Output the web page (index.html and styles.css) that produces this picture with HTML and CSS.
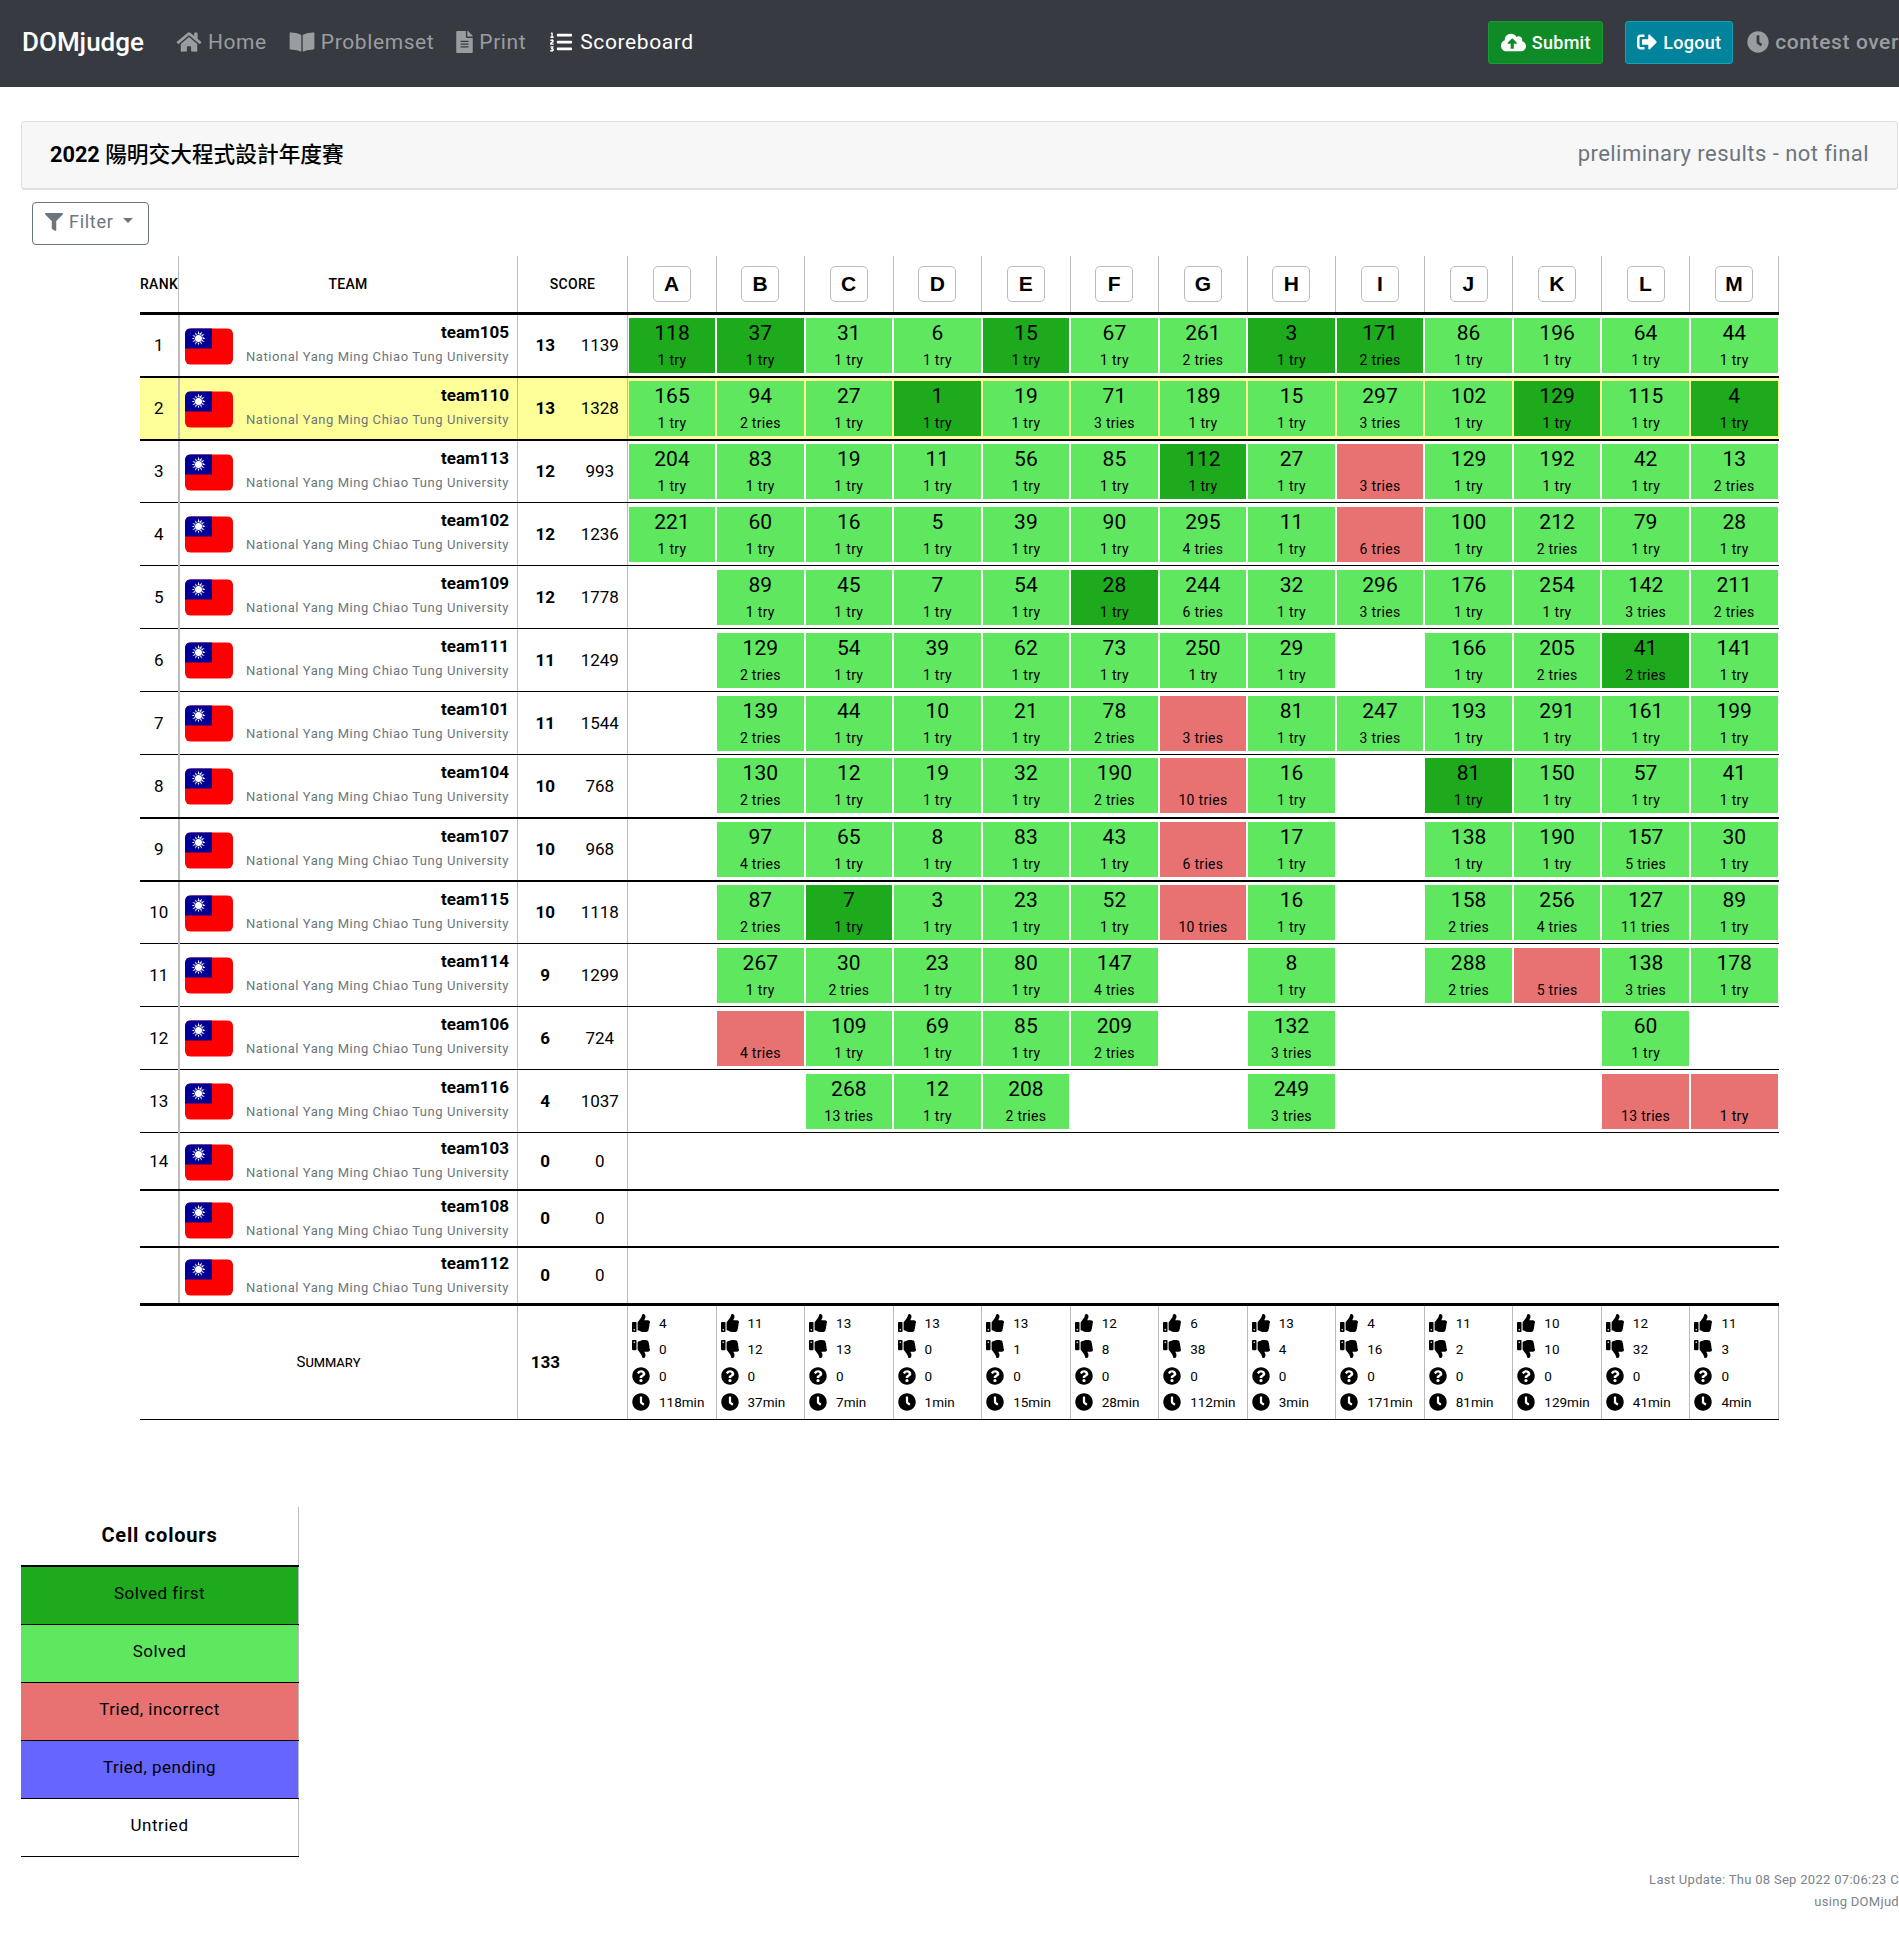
FILE: index.html

```html
<!DOCTYPE html>
<html lang="en">
<head>
    <meta charset="UTF-8">
    <meta name="viewport" content="width=device-width, initial-scale=1.0">
    <title>Scoreboard - DOMjudge</title>
    <link rel="stylesheet" href="styles.css">
</head>
<body>
<svg class="icon-defs" aria-hidden="true">
    <symbol id="i-home" viewBox="0 0 576 512"><path d="M280.37 148.26L96 300.11V464a16 16 0 0 0 16 16l112.06-.29a16 16 0 0 0 15.92-16V368a16 16 0 0 1 16-16h64a16 16 0 0 1 16 16v95.64a16 16 0 0 0 16 16.05L464 480a16 16 0 0 0 16-16V300L295.67 148.26a12.19 12.19 0 0 0-15.3 0zM571.6 251.47L488 182.56V44.05a12 12 0 0 0-12-12h-56a12 12 0 0 0-12 12v72.61L318.47 43a48 48 0 0 0-61 0L4.34 251.47a12 12 0 0 0-1.6 16.9l25.5 31A12 12 0 0 0 45.15 301l235.22-193.74a12.19 12.19 0 0 1 15.3 0L530.9 301a12 12 0 0 0 16.9-1.6l25.5-31a12 12 0 0 0-1.7-16.93z"/></symbol>
    <symbol id="i-book" viewBox="0 0 576 512"><path d="M542.22 32.05c-54.8 3.11-163.72 14.43-230.96 55.59-4.64 2.84-7.27 7.89-7.27 13.17v363.87c0 11.55 12.63 18.85 23.28 13.49 69.18-34.82 169.23-44.32 218.7-46.92 16.89-.89 30.02-14.43 30.02-30.66V62.75c.01-17.71-15.35-31.74-33.77-30.7zM264.73 87.64C197.5 46.48 88.58 35.17 33.78 32.05 15.36 31.01 0 45.04 0 62.75V400.6c0 16.24 13.13 29.78 30.02 30.66 49.49 2.6 149.59 12.11 218.77 46.95 10.62 5.35 23.21-1.94 23.21-13.46V100.63c0-5.29-2.62-10.14-7.27-12.99z"/></symbol>
    <symbol id="i-file" viewBox="0 0 384 512"><path d="M224 136V0H24C10.7 0 0 10.7 0 24v464c0 13.3 10.7 24 24 24h336c13.3 0 24-10.7 24-24V160H248c-13.2 0-24-10.8-24-24zm64 236c0 6.6-5.4 12-12 12H108c-6.6 0-12-5.4-12-12v-8c0-6.6 5.4-12 12-12h168c6.6 0 12 5.4 12 12v8zm0-64c0 6.6-5.4 12-12 12H108c-6.6 0-12-5.4-12-12v-8c0-6.6 5.4-12 12-12h168c6.6 0 12 5.4 12 12v8zm0-72v8c0 6.6-5.4 12-12 12H108c-6.6 0-12-5.4-12-12v-8c0-6.6 5.4-12 12-12h168c6.6 0 12 5.4 12 12zm96-114.1v6.1H256V0h6.1c6.4 0 12.5 2.5 17 7l97.9 98c4.5 4.5 7 10.6 7 16.9z"/></symbol>
    <symbol id="i-list" viewBox="0 0 512 512"><path d="M61.77 401l17.5-20.15a19.92 19.92 0 0 0 5.07-14.19v-3.31C84.34 356 80.5 352 73 352H16a8 8 0 0 0-8 8v16a8 8 0 0 0 8 8h22.83a157.41 157.41 0 0 0-11 12.31l-5.61 7c-4 5.07-5.25 10.13-2.8 14.88l1.05 1.93c3 5.76 6.29 7.88 12.25 7.88h4.73c10.33 0 15.94 2.44 15.94 9.09 0 4.72-4.2 8.22-14.36 8.22a41.54 41.54 0 0 1-15.47-3.12c-6.49-3.88-11.74-3.5-15.6 3.12l-5.59 9.31c-3.72 6.13-3.19 11.72 2.63 15.94 7.71 4.69 20.38 9.44 37 9.44 34.16 0 48.5-22.75 48.5-44.12-.03-14.38-9.12-29.76-28.73-34.88zM496 224H176a16 16 0 0 0-16 16v32a16 16 0 0 0 16 16h320a16 16 0 0 0 16-16v-32a16 16 0 0 0-16-16zm0-160H176a16 16 0 0 0-16 16v32a16 16 0 0 0 16 16h320a16 16 0 0 0 16-16V80a16 16 0 0 0-16-16zm0 320H176a16 16 0 0 0-16 16v32a16 16 0 0 0 16 16h320a16 16 0 0 0 16-16v-32a16 16 0 0 0-16-16zM16 160h64a8 8 0 0 0 8-8v-16a8 8 0 0 0-8-8H64V40a8 8 0 0 0-8-8H32a8 8 0 0 0-7.14 4.42l-8 16A8 8 0 0 0 24 64h8v64H16a8 8 0 0 0-8 8v16a8 8 0 0 0 8 8zm-3.91 160H80a8 8 0 0 0 8-8v-16a8 8 0 0 0-8-8H41.32c3.29-10.29 48.68-18.68 48.68-56.44 0-29.06-25-39.56-44.47-39.56-21.36 0-33.8 10-40.46 18.75-4.37 5.59-3 10.84 2.8 15.37l8.58 6.88c5.61 4.56 11 2.47 16.12-2.44a13.44 13.44 0 0 1 9.46-3.84c3.33 0 9.28 1.56 9.28 8.75C51 248.19 0 257.31 0 304.59v4C0 316 5.08 320 12.09 320z"/></symbol>
    <symbol id="i-cloud" viewBox="0 0 640 512"><path d="M537.6 226.6c4.1-10.7 6.4-22.4 6.4-34.6 0-53-43-96-96-96-19.7 0-38.1 6-53.3 16.2C367 64.2 315.3 32 256 32c-88.4 0-160 71.6-160 160 0 2.7.1 5.4.2 8.1C40.2 219.8 0 273.2 0 336c0 79.5 64.5 144 144 144h368c70.7 0 128-57.3 128-128 0-61.9-44-113.6-102.4-125.4zM393.4 288H328v112c0 8.8-7.2 16-16 16h-48c-8.8 0-16-7.2-16-16V288h-65.4c-14.3 0-21.4-17.2-11.3-27.3l105.4-105.4c6.2-6.2 16.4-6.2 22.6 0l105.4 105.4c10.1 10.1 2.9 27.3-11.3 27.3z"/></symbol>
    <symbol id="i-signout" viewBox="0 0 512 512"><path d="M497 273L329 441c-15 15-41 4.5-41-17v-96H152c-13.3 0-24-10.7-24-24v-96c0-13.3 10.7-24 24-24h136V88c0-21.4 25.9-32 41-17l168 168c9.3 9.4 9.3 24.6 0 34zM192 436v-40c0-6.6-5.4-12-12-12H96c-17.7 0-32-14.3-32-32V160c0-17.7 14.3-32 32-32h84c6.6 0 12-5.4 12-12V76c0-6.6-5.4-12-12-12H96c-53 0-96 43-96 96v192c0 53 43 96 96 96h84c6.6 0 12-5.4 12-12z"/></symbol>
    <symbol id="i-clock" viewBox="0 0 512 512"><path d="M256,8C119,8,8,119,8,256S119,504,256,504,504,393,504,256,393,8,256,8Zm92.49,313h0l-20,25a16,16,0,0,1-22.49,2.5h0l-67-49.72a40,40,0,0,1-15-31.23V112a16,16,0,0,1,16-16h32a16,16,0,0,1,16,16V256l58,42.5A16,16,0,0,1,348.49,321Z"/></symbol>
    <symbol id="i-filter" viewBox="0 0 512 512"><path d="M487.976 0H24.028C2.71 0-8.047 25.866 7.058 40.971L192 225.941V432c0 7.831 3.821 15.17 10.237 19.662l80 55.98C298.02 518.69 320 507.493 320 487.98V225.941l184.947-184.97C520.021 25.896 509.338 0 487.976 0z"/></symbol>
    <symbol id="i-up" viewBox="0 0 512 512"><path d="M104 224H24c-13.255 0-24 10.745-24 24v240c0 13.255 10.745 24 24 24h80c13.255 0 24-10.745 24-24V248c0-13.255-10.745-24-24-24zM64 472c-13.255 0-24-10.745-24-24s10.745-24 24-24 24 10.745 24 24-10.745 24-24 24zM384 81.452c0 42.416-25.97 66.208-33.277 94.548h101.723c33.397 0 59.397 27.746 59.553 58.098.084 17.938-7.546 37.249-19.439 49.197l-.11.11c9.836 23.337 8.237 56.037-9.308 79.469 8.681 25.895-.069 57.704-16.382 74.757 4.298 17.598 2.244 32.575-6.148 44.632C440.202 511.587 389.616 512 346.839 512l-2.845-.001c-48.287-.017-87.806-17.598-119.56-31.725-15.957-7.099-36.821-15.887-52.651-16.178-6.54-.12-11.783-5.457-11.783-11.998v-213.77c0-3.2 1.282-6.271 3.558-8.521 39.614-39.144 56.648-80.587 89.117-113.111 14.804-14.832 20.188-37.236 25.393-58.902C282.515 39.293 291.817 0 312 0c24 0 72 8 72 81.452z"/></symbol>
    <symbol id="i-help" viewBox="0 0 512 512"><path d="M504 256c0 136.997-111.043 248-248 248S8 392.997 8 256C8 119.083 119.043 8 256 8s248 111.083 248 248zM262.655 90c-54.497 0-89.255 22.957-116.549 63.758-3.536 5.286-2.353 12.415 2.715 16.258l34.699 26.31c5.205 3.947 12.621 3.008 16.665-2.122 17.864-22.658 30.113-35.797 57.303-35.797 20.429 0 45.698 13.148 45.698 32.958 0 14.976-12.363 22.667-32.534 33.976C247.128 238.528 216 254.941 216 296v4c0 6.627 5.373 12 12 12h56c6.627 0 12-5.373 12-12v-1.333c0-28.462 83.186-29.647 83.186-106.667 0-58.002-60.165-102-116.531-102zM256 338c-25.365 0-46 20.635-46 46 0 25.364 20.635 46 46 46s46-20.636 46-46c0-25.365-20.635-46-46-46z"/></symbol>
    <symbol id="i-flag" viewBox="0 0 48 36">
        <rect width="48" height="36" fill="#fe0000"/>
        <rect width="27" height="20" fill="#000095"/>
        <path fill="#fff" d="M13.5 2l1 3.6 2.5-2.7-.9 3.6 3.6-.9-2.7 2.5L20.5 10l-3.5 1 2.7 2.5-3.6-.9.9 3.6-2.5-2.7-1 3.5-1-3.5L10 16.200l.9-3.600-3.600.9L10 11l-3.500-1 3.500-1-2.700-2.500 3.600.9-.9-3.600 2.500 2.700z"/>
        <circle cx="13.500" cy="10" r="4.200" fill="#000095"/>
        <circle cx="13.500" cy="10" r="3.500" fill="#fff"/>
    </symbol>
</svg>

<nav class="navbar">
    <a class="brand">DOMjudge</a>
    <a class="nav-link"><svg class="icon"><use href="#i-home"/></svg>Home</a>
    <a class="nav-link"><svg class="icon"><use href="#i-book"/></svg>Problemset</a>
    <a class="nav-link"><svg class="icon icon-file"><use href="#i-file"/></svg>Print</a>
    <a class="nav-link active"><svg class="icon"><use href="#i-list"/></svg>Scoreboard</a>
    <div class="nav-right">
        <a class="btn-nav btn-submit"><svg class="icon"><use href="#i-cloud"/></svg>Submit</a>
        <a class="btn-nav btn-logout"><svg class="icon"><use href="#i-signout"/></svg>Logout</a>
        <span class="contest-state"><svg class="icon"><use href="#i-clock"/></svg>contest over</span>
    </div>
</nav>

<div class="card-header">
    <span class="contest-title"><b>2022</b> 陽明交大程式設計年度賽</span>
    <span class="contest-note">preliminary results - not final</span>
</div>

<button class="btn-filter"><svg class="icon"><use href="#i-filter"/></svg>Filter<span class="caret"></span></button>

<table class="scoreboard">
    <thead>
        <tr>
            <th class="col-rank">RANK</th>
            <th class="col-team">TEAM</th>
            <th class="col-score" colspan="2">SCORE</th>
            <th class="col-prob"><span class="prob">A</span></th>
            <th class="col-prob"><span class="prob">B</span></th>
            <th class="col-prob"><span class="prob">C</span></th>
            <th class="col-prob"><span class="prob">D</span></th>
            <th class="col-prob"><span class="prob">E</span></th>
            <th class="col-prob"><span class="prob">F</span></th>
            <th class="col-prob"><span class="prob">G</span></th>
            <th class="col-prob"><span class="prob">H</span></th>
            <th class="col-prob"><span class="prob">I</span></th>
            <th class="col-prob"><span class="prob">J</span></th>
            <th class="col-prob"><span class="prob">K</span></th>
            <th class="col-prob"><span class="prob">L</span></th>
            <th class="col-prob"><span class="prob">M</span></th>
        </tr>
    </thead>
    <tbody>
        <tr class="row-thick">
            <td class="rank">1</td>
            <td class="team"><div class="team-box"><svg class="flag"><use href="#i-flag"/></svg><div class="team-text"><div class="team-name">team105</div><div class="team-aff">National Yang Ming Chiao Tung University</div></div></div></td>
            <td class="points">13</td><td class="time">1139</td>
            <td class="cell"><div class="sc first">118<span>1 try</span></div></td>
            <td class="cell"><div class="sc first">37<span>1 try</span></div></td>
            <td class="cell"><div class="sc ok">31<span>1 try</span></div></td>
            <td class="cell"><div class="sc ok">6<span>1 try</span></div></td>
            <td class="cell"><div class="sc first">15<span>1 try</span></div></td>
            <td class="cell"><div class="sc ok">67<span>1 try</span></div></td>
            <td class="cell"><div class="sc ok">261<span>2 tries</span></div></td>
            <td class="cell"><div class="sc first">3<span>1 try</span></div></td>
            <td class="cell"><div class="sc first">171<span>2 tries</span></div></td>
            <td class="cell"><div class="sc ok">86<span>1 try</span></div></td>
            <td class="cell"><div class="sc ok">196<span>1 try</span></div></td>
            <td class="cell"><div class="sc ok">64<span>1 try</span></div></td>
            <td class="cell"><div class="sc ok">44<span>1 try</span></div></td>
        </tr>
        <tr class="row-thick self">
            <td class="rank">2</td>
            <td class="team"><div class="team-box"><svg class="flag"><use href="#i-flag"/></svg><div class="team-text"><div class="team-name">team110</div><div class="team-aff">National Yang Ming Chiao Tung University</div></div></div></td>
            <td class="points">13</td><td class="time">1328</td>
            <td class="cell"><div class="sc ok">165<span>1 try</span></div></td>
            <td class="cell"><div class="sc ok">94<span>2 tries</span></div></td>
            <td class="cell"><div class="sc ok">27<span>1 try</span></div></td>
            <td class="cell"><div class="sc first">1<span>1 try</span></div></td>
            <td class="cell"><div class="sc ok">19<span>1 try</span></div></td>
            <td class="cell"><div class="sc ok">71<span>3 tries</span></div></td>
            <td class="cell"><div class="sc ok">189<span>1 try</span></div></td>
            <td class="cell"><div class="sc ok">15<span>1 try</span></div></td>
            <td class="cell"><div class="sc ok">297<span>3 tries</span></div></td>
            <td class="cell"><div class="sc ok">102<span>1 try</span></div></td>
            <td class="cell"><div class="sc first">129<span>1 try</span></div></td>
            <td class="cell"><div class="sc ok">115<span>1 try</span></div></td>
            <td class="cell"><div class="sc first">4<span>1 try</span></div></td>
        </tr>
        <tr>
            <td class="rank">3</td>
            <td class="team"><div class="team-box"><svg class="flag"><use href="#i-flag"/></svg><div class="team-text"><div class="team-name">team113</div><div class="team-aff">National Yang Ming Chiao Tung University</div></div></div></td>
            <td class="points">12</td><td class="time">993</td>
            <td class="cell"><div class="sc ok">204<span>1 try</span></div></td>
            <td class="cell"><div class="sc ok">83<span>1 try</span></div></td>
            <td class="cell"><div class="sc ok">19<span>1 try</span></div></td>
            <td class="cell"><div class="sc ok">11<span>1 try</span></div></td>
            <td class="cell"><div class="sc ok">56<span>1 try</span></div></td>
            <td class="cell"><div class="sc ok">85<span>1 try</span></div></td>
            <td class="cell"><div class="sc first">112<span>1 try</span></div></td>
            <td class="cell"><div class="sc ok">27<span>1 try</span></div></td>
            <td class="cell"><div class="sc bad">&nbsp;<span>3 tries</span></div></td>
            <td class="cell"><div class="sc ok">129<span>1 try</span></div></td>
            <td class="cell"><div class="sc ok">192<span>1 try</span></div></td>
            <td class="cell"><div class="sc ok">42<span>1 try</span></div></td>
            <td class="cell"><div class="sc ok">13<span>2 tries</span></div></td>
        </tr>
        <tr>
            <td class="rank">4</td>
            <td class="team"><div class="team-box"><svg class="flag"><use href="#i-flag"/></svg><div class="team-text"><div class="team-name">team102</div><div class="team-aff">National Yang Ming Chiao Tung University</div></div></div></td>
            <td class="points">12</td><td class="time">1236</td>
            <td class="cell"><div class="sc ok">221<span>1 try</span></div></td>
            <td class="cell"><div class="sc ok">60<span>1 try</span></div></td>
            <td class="cell"><div class="sc ok">16<span>1 try</span></div></td>
            <td class="cell"><div class="sc ok">5<span>1 try</span></div></td>
            <td class="cell"><div class="sc ok">39<span>1 try</span></div></td>
            <td class="cell"><div class="sc ok">90<span>1 try</span></div></td>
            <td class="cell"><div class="sc ok">295<span>4 tries</span></div></td>
            <td class="cell"><div class="sc ok">11<span>1 try</span></div></td>
            <td class="cell"><div class="sc bad">&nbsp;<span>6 tries</span></div></td>
            <td class="cell"><div class="sc ok">100<span>1 try</span></div></td>
            <td class="cell"><div class="sc ok">212<span>2 tries</span></div></td>
            <td class="cell"><div class="sc ok">79<span>1 try</span></div></td>
            <td class="cell"><div class="sc ok">28<span>1 try</span></div></td>
        </tr>
        <tr>
            <td class="rank">5</td>
            <td class="team"><div class="team-box"><svg class="flag"><use href="#i-flag"/></svg><div class="team-text"><div class="team-name">team109</div><div class="team-aff">National Yang Ming Chiao Tung University</div></div></div></td>
            <td class="points">12</td><td class="time">1778</td>
            <td class="cell"></td>
            <td class="cell"><div class="sc ok">89<span>1 try</span></div></td>
            <td class="cell"><div class="sc ok">45<span>1 try</span></div></td>
            <td class="cell"><div class="sc ok">7<span>1 try</span></div></td>
            <td class="cell"><div class="sc ok">54<span>1 try</span></div></td>
            <td class="cell"><div class="sc first">28<span>1 try</span></div></td>
            <td class="cell"><div class="sc ok">244<span>6 tries</span></div></td>
            <td class="cell"><div class="sc ok">32<span>1 try</span></div></td>
            <td class="cell"><div class="sc ok">296<span>3 tries</span></div></td>
            <td class="cell"><div class="sc ok">176<span>1 try</span></div></td>
            <td class="cell"><div class="sc ok">254<span>1 try</span></div></td>
            <td class="cell"><div class="sc ok">142<span>3 tries</span></div></td>
            <td class="cell"><div class="sc ok">211<span>2 tries</span></div></td>
        </tr>
        <tr>
            <td class="rank">6</td>
            <td class="team"><div class="team-box"><svg class="flag"><use href="#i-flag"/></svg><div class="team-text"><div class="team-name">team111</div><div class="team-aff">National Yang Ming Chiao Tung University</div></div></div></td>
            <td class="points">11</td><td class="time">1249</td>
            <td class="cell"></td>
            <td class="cell"><div class="sc ok">129<span>2 tries</span></div></td>
            <td class="cell"><div class="sc ok">54<span>1 try</span></div></td>
            <td class="cell"><div class="sc ok">39<span>1 try</span></div></td>
            <td class="cell"><div class="sc ok">62<span>1 try</span></div></td>
            <td class="cell"><div class="sc ok">73<span>1 try</span></div></td>
            <td class="cell"><div class="sc ok">250<span>1 try</span></div></td>
            <td class="cell"><div class="sc ok">29<span>1 try</span></div></td>
            <td class="cell"></td>
            <td class="cell"><div class="sc ok">166<span>1 try</span></div></td>
            <td class="cell"><div class="sc ok">205<span>2 tries</span></div></td>
            <td class="cell"><div class="sc first">41<span>2 tries</span></div></td>
            <td class="cell"><div class="sc ok">141<span>1 try</span></div></td>
        </tr>
        <tr>
            <td class="rank">7</td>
            <td class="team"><div class="team-box"><svg class="flag"><use href="#i-flag"/></svg><div class="team-text"><div class="team-name">team101</div><div class="team-aff">National Yang Ming Chiao Tung University</div></div></div></td>
            <td class="points">11</td><td class="time">1544</td>
            <td class="cell"></td>
            <td class="cell"><div class="sc ok">139<span>2 tries</span></div></td>
            <td class="cell"><div class="sc ok">44<span>1 try</span></div></td>
            <td class="cell"><div class="sc ok">10<span>1 try</span></div></td>
            <td class="cell"><div class="sc ok">21<span>1 try</span></div></td>
            <td class="cell"><div class="sc ok">78<span>2 tries</span></div></td>
            <td class="cell"><div class="sc bad">&nbsp;<span>3 tries</span></div></td>
            <td class="cell"><div class="sc ok">81<span>1 try</span></div></td>
            <td class="cell"><div class="sc ok">247<span>3 tries</span></div></td>
            <td class="cell"><div class="sc ok">193<span>1 try</span></div></td>
            <td class="cell"><div class="sc ok">291<span>1 try</span></div></td>
            <td class="cell"><div class="sc ok">161<span>1 try</span></div></td>
            <td class="cell"><div class="sc ok">199<span>1 try</span></div></td>
        </tr>
        <tr class="row-thick">
            <td class="rank">8</td>
            <td class="team"><div class="team-box"><svg class="flag"><use href="#i-flag"/></svg><div class="team-text"><div class="team-name">team104</div><div class="team-aff">National Yang Ming Chiao Tung University</div></div></div></td>
            <td class="points">10</td><td class="time">768</td>
            <td class="cell"></td>
            <td class="cell"><div class="sc ok">130<span>2 tries</span></div></td>
            <td class="cell"><div class="sc ok">12<span>1 try</span></div></td>
            <td class="cell"><div class="sc ok">19<span>1 try</span></div></td>
            <td class="cell"><div class="sc ok">32<span>1 try</span></div></td>
            <td class="cell"><div class="sc ok">190<span>2 tries</span></div></td>
            <td class="cell"><div class="sc bad">&nbsp;<span>10 tries</span></div></td>
            <td class="cell"><div class="sc ok">16<span>1 try</span></div></td>
            <td class="cell"></td>
            <td class="cell"><div class="sc first">81<span>1 try</span></div></td>
            <td class="cell"><div class="sc ok">150<span>1 try</span></div></td>
            <td class="cell"><div class="sc ok">57<span>1 try</span></div></td>
            <td class="cell"><div class="sc ok">41<span>1 try</span></div></td>
        </tr>
        <tr class="row-thick">
            <td class="rank">9</td>
            <td class="team"><div class="team-box"><svg class="flag"><use href="#i-flag"/></svg><div class="team-text"><div class="team-name">team107</div><div class="team-aff">National Yang Ming Chiao Tung University</div></div></div></td>
            <td class="points">10</td><td class="time">968</td>
            <td class="cell"></td>
            <td class="cell"><div class="sc ok">97<span>4 tries</span></div></td>
            <td class="cell"><div class="sc ok">65<span>1 try</span></div></td>
            <td class="cell"><div class="sc ok">8<span>1 try</span></div></td>
            <td class="cell"><div class="sc ok">83<span>1 try</span></div></td>
            <td class="cell"><div class="sc ok">43<span>1 try</span></div></td>
            <td class="cell"><div class="sc bad">&nbsp;<span>6 tries</span></div></td>
            <td class="cell"><div class="sc ok">17<span>1 try</span></div></td>
            <td class="cell"></td>
            <td class="cell"><div class="sc ok">138<span>1 try</span></div></td>
            <td class="cell"><div class="sc ok">190<span>1 try</span></div></td>
            <td class="cell"><div class="sc ok">157<span>5 tries</span></div></td>
            <td class="cell"><div class="sc ok">30<span>1 try</span></div></td>
        </tr>
        <tr>
            <td class="rank">10</td>
            <td class="team"><div class="team-box"><svg class="flag"><use href="#i-flag"/></svg><div class="team-text"><div class="team-name">team115</div><div class="team-aff">National Yang Ming Chiao Tung University</div></div></div></td>
            <td class="points">10</td><td class="time">1118</td>
            <td class="cell"></td>
            <td class="cell"><div class="sc ok">87<span>2 tries</span></div></td>
            <td class="cell"><div class="sc first">7<span>1 try</span></div></td>
            <td class="cell"><div class="sc ok">3<span>1 try</span></div></td>
            <td class="cell"><div class="sc ok">23<span>1 try</span></div></td>
            <td class="cell"><div class="sc ok">52<span>1 try</span></div></td>
            <td class="cell"><div class="sc bad">&nbsp;<span>10 tries</span></div></td>
            <td class="cell"><div class="sc ok">16<span>1 try</span></div></td>
            <td class="cell"></td>
            <td class="cell"><div class="sc ok">158<span>2 tries</span></div></td>
            <td class="cell"><div class="sc ok">256<span>4 tries</span></div></td>
            <td class="cell"><div class="sc ok">127<span>11 tries</span></div></td>
            <td class="cell"><div class="sc ok">89<span>1 try</span></div></td>
        </tr>
        <tr>
            <td class="rank">11</td>
            <td class="team"><div class="team-box"><svg class="flag"><use href="#i-flag"/></svg><div class="team-text"><div class="team-name">team114</div><div class="team-aff">National Yang Ming Chiao Tung University</div></div></div></td>
            <td class="points">9</td><td class="time">1299</td>
            <td class="cell"></td>
            <td class="cell"><div class="sc ok">267<span>1 try</span></div></td>
            <td class="cell"><div class="sc ok">30<span>2 tries</span></div></td>
            <td class="cell"><div class="sc ok">23<span>1 try</span></div></td>
            <td class="cell"><div class="sc ok">80<span>1 try</span></div></td>
            <td class="cell"><div class="sc ok">147<span>4 tries</span></div></td>
            <td class="cell"></td>
            <td class="cell"><div class="sc ok">8<span>1 try</span></div></td>
            <td class="cell"></td>
            <td class="cell"><div class="sc ok">288<span>2 tries</span></div></td>
            <td class="cell"><div class="sc bad">&nbsp;<span>5 tries</span></div></td>
            <td class="cell"><div class="sc ok">138<span>3 tries</span></div></td>
            <td class="cell"><div class="sc ok">178<span>1 try</span></div></td>
        </tr>
        <tr>
            <td class="rank">12</td>
            <td class="team"><div class="team-box"><svg class="flag"><use href="#i-flag"/></svg><div class="team-text"><div class="team-name">team106</div><div class="team-aff">National Yang Ming Chiao Tung University</div></div></div></td>
            <td class="points">6</td><td class="time">724</td>
            <td class="cell"></td>
            <td class="cell"><div class="sc bad">&nbsp;<span>4 tries</span></div></td>
            <td class="cell"><div class="sc ok">109<span>1 try</span></div></td>
            <td class="cell"><div class="sc ok">69<span>1 try</span></div></td>
            <td class="cell"><div class="sc ok">85<span>1 try</span></div></td>
            <td class="cell"><div class="sc ok">209<span>2 tries</span></div></td>
            <td class="cell"></td>
            <td class="cell"><div class="sc ok">132<span>3 tries</span></div></td>
            <td class="cell"></td>
            <td class="cell"></td>
            <td class="cell"></td>
            <td class="cell"><div class="sc ok">60<span>1 try</span></div></td>
            <td class="cell"></td>
        </tr>
        <tr>
            <td class="rank">13</td>
            <td class="team"><div class="team-box"><svg class="flag"><use href="#i-flag"/></svg><div class="team-text"><div class="team-name">team116</div><div class="team-aff">National Yang Ming Chiao Tung University</div></div></div></td>
            <td class="points">4</td><td class="time">1037</td>
            <td class="cell"></td>
            <td class="cell"></td>
            <td class="cell"><div class="sc ok">268<span>13 tries</span></div></td>
            <td class="cell"><div class="sc ok">12<span>1 try</span></div></td>
            <td class="cell"><div class="sc ok">208<span>2 tries</span></div></td>
            <td class="cell"></td>
            <td class="cell"></td>
            <td class="cell"><div class="sc ok">249<span>3 tries</span></div></td>
            <td class="cell"></td>
            <td class="cell"></td>
            <td class="cell"></td>
            <td class="cell"><div class="sc bad">&nbsp;<span>13 tries</span></div></td>
            <td class="cell"><div class="sc bad">&nbsp;<span>1 try</span></div></td>
        </tr>
        <tr class="row-empty row-thick">
            <td class="rank">14</td>
            <td class="team"><div class="team-box"><svg class="flag"><use href="#i-flag"/></svg><div class="team-text"><div class="team-name">team103</div><div class="team-aff">National Yang Ming Chiao Tung University</div></div></div></td>
            <td class="points">0</td><td class="time">0</td>
            <td class="blank" colspan="13"></td>
        </tr>
        <tr class="row-empty row-thick">
            <td class="rank"></td>
            <td class="team"><div class="team-box"><svg class="flag"><use href="#i-flag"/></svg><div class="team-text"><div class="team-name">team108</div><div class="team-aff">National Yang Ming Chiao Tung University</div></div></div></td>
            <td class="points">0</td><td class="time">0</td>
            <td class="blank" colspan="13"></td>
        </tr>
        <tr class="row-empty">
            <td class="rank"></td>
            <td class="team"><div class="team-box"><svg class="flag"><use href="#i-flag"/></svg><div class="team-text"><div class="team-name">team112</div><div class="team-aff">National Yang Ming Chiao Tung University</div></div></div></td>
            <td class="points">0</td><td class="time">0</td>
            <td class="blank" colspan="13"></td>
        </tr>
    </tbody>
    <tfoot>
        <tr>
            <td class="summary-label" colspan="2">Summary</td>
            <td class="summary-total" colspan="2">133</td>
            <td class="stat"><p><svg class="icon"><use href="#i-up"/></svg>4</p><p><svg class="icon flip"><use href="#i-up"/></svg>0</p><p><svg class="icon"><use href="#i-help"/></svg>0</p><p><svg class="icon"><use href="#i-clock"/></svg>118min</p></td>
            <td class="stat"><p><svg class="icon"><use href="#i-up"/></svg>11</p><p><svg class="icon flip"><use href="#i-up"/></svg>12</p><p><svg class="icon"><use href="#i-help"/></svg>0</p><p><svg class="icon"><use href="#i-clock"/></svg>37min</p></td>
            <td class="stat"><p><svg class="icon"><use href="#i-up"/></svg>13</p><p><svg class="icon flip"><use href="#i-up"/></svg>13</p><p><svg class="icon"><use href="#i-help"/></svg>0</p><p><svg class="icon"><use href="#i-clock"/></svg>7min</p></td>
            <td class="stat"><p><svg class="icon"><use href="#i-up"/></svg>13</p><p><svg class="icon flip"><use href="#i-up"/></svg>0</p><p><svg class="icon"><use href="#i-help"/></svg>0</p><p><svg class="icon"><use href="#i-clock"/></svg>1min</p></td>
            <td class="stat"><p><svg class="icon"><use href="#i-up"/></svg>13</p><p><svg class="icon flip"><use href="#i-up"/></svg>1</p><p><svg class="icon"><use href="#i-help"/></svg>0</p><p><svg class="icon"><use href="#i-clock"/></svg>15min</p></td>
            <td class="stat"><p><svg class="icon"><use href="#i-up"/></svg>12</p><p><svg class="icon flip"><use href="#i-up"/></svg>8</p><p><svg class="icon"><use href="#i-help"/></svg>0</p><p><svg class="icon"><use href="#i-clock"/></svg>28min</p></td>
            <td class="stat"><p><svg class="icon"><use href="#i-up"/></svg>6</p><p><svg class="icon flip"><use href="#i-up"/></svg>38</p><p><svg class="icon"><use href="#i-help"/></svg>0</p><p><svg class="icon"><use href="#i-clock"/></svg>112min</p></td>
            <td class="stat"><p><svg class="icon"><use href="#i-up"/></svg>13</p><p><svg class="icon flip"><use href="#i-up"/></svg>4</p><p><svg class="icon"><use href="#i-help"/></svg>0</p><p><svg class="icon"><use href="#i-clock"/></svg>3min</p></td>
            <td class="stat"><p><svg class="icon"><use href="#i-up"/></svg>4</p><p><svg class="icon flip"><use href="#i-up"/></svg>16</p><p><svg class="icon"><use href="#i-help"/></svg>0</p><p><svg class="icon"><use href="#i-clock"/></svg>171min</p></td>
            <td class="stat"><p><svg class="icon"><use href="#i-up"/></svg>11</p><p><svg class="icon flip"><use href="#i-up"/></svg>2</p><p><svg class="icon"><use href="#i-help"/></svg>0</p><p><svg class="icon"><use href="#i-clock"/></svg>81min</p></td>
            <td class="stat"><p><svg class="icon"><use href="#i-up"/></svg>10</p><p><svg class="icon flip"><use href="#i-up"/></svg>10</p><p><svg class="icon"><use href="#i-help"/></svg>0</p><p><svg class="icon"><use href="#i-clock"/></svg>129min</p></td>
            <td class="stat"><p><svg class="icon"><use href="#i-up"/></svg>12</p><p><svg class="icon flip"><use href="#i-up"/></svg>32</p><p><svg class="icon"><use href="#i-help"/></svg>0</p><p><svg class="icon"><use href="#i-clock"/></svg>41min</p></td>
            <td class="stat"><p><svg class="icon"><use href="#i-up"/></svg>11</p><p><svg class="icon flip"><use href="#i-up"/></svg>3</p><p><svg class="icon"><use href="#i-help"/></svg>0</p><p><svg class="icon"><use href="#i-clock"/></svg>4min</p></td>
        </tr>
    </tfoot>
</table>

<table class="legend">
    <thead>
        <tr><th>Cell colours</th></tr>
    </thead>
    <tbody>
        <tr><td class="first">Solved first</td></tr>
        <tr><td class="ok">Solved</td></tr>
        <tr><td class="bad">Tried, incorrect</td></tr>
        <tr><td class="pending">Tried, pending</td></tr>
        <tr><td>Untried</td></tr>
    </tbody>
</table>

<footer class="page-foot">
    <div>Last Update: Thu 08 Sep 2022 07:06:23 C</div>
    <div>using DOMjud</div>
</footer>
</body>
</html>
```

FILE: styles.css

```css
html, body {
    overflow-x: hidden;
}

body {
    margin: 0;
    font-family: Roboto, "Noto Sans CJK TC", sans-serif;
    font-size: 16px;
    color: #000;
    background-color: #fff;
}

.icon-defs {
    display: none;
}

.icon {
    width: 1em;
    height: 1em;
    fill: currentColor;
    flex-shrink: 0;
}

/* top bar */
.navbar {
    display: flex;
    align-items: center;
    box-sizing: border-box;
    height: 87px;
    padding: 0 0 3px 22px;
    background-color: #373a41;
    white-space: nowrap;
}

.brand {
    font-size: 26px;
    font-weight: 500;
    color: #fff;
    margin-right: 32px;
}

.nav-link {
    display: flex;
    align-items: center;
    gap: 6px;
    margin-right: 22px;
    font-size: 21px;
    letter-spacing: 0.6px;
    color: #9a9da0;
}

.nav-link .icon {
    width: 26px;
    height: 22px;
}

.nav-link .icon-file {
    width: 17px;
}

.nav-link.active {
    color: #fff;
}

.nav-right {
    display: flex;
    align-items: center;
    margin-left: auto;
}

.btn-nav {
    display: flex;
    align-items: center;
    justify-content: center;
    gap: 6px;
    height: 43px;
    box-sizing: border-box;
    border-radius: 3px;
    font-size: 18px;
    font-weight: 500;
    letter-spacing: 0.3px;
    color: #fff;
}

.btn-submit {
    width: 115px;
    background-color: #0e8b27;
    border: 1px solid #1a9c34;
    margin-right: 22px;
}

.btn-submit .icon {
    width: 25px;
    height: 21px;
}

.btn-logout {
    width: 108px;
    background-color: #00839b;
    border: 1px solid #14a0b8;
    margin-right: 14px;
}

.btn-logout .icon {
    width: 20px;
    height: 20px;
}

.contest-state {
    display: flex;
    align-items: center;
    gap: 6px;
    font-size: 21px;
    font-weight: 500;
    letter-spacing: 0.6px;
    color: #9a9da0;
}

.contest-state .icon {
    width: 22px;
    height: 22px;
}

/* contest title */
.card-header {
    display: flex;
    justify-content: space-between;
    align-items: center;
    box-sizing: border-box;
    height: 69px;
    margin: 34px 1px 0 21px;
    padding: 0 28px 3px;
    background-color: #f7f7f7;
    border: 1px solid #dfdfdf;
    border-bottom-width: 2px;
    border-radius: 4px;
}

.contest-title {
    margin-bottom: 3px;
    font-size: 21.7px;
    font-weight: 500;
}

.contest-title b {
    font-weight: 700;
}

.contest-note {
    font-size: 22px;
    letter-spacing: 0.45px;
    color: #6c757d;
}

.btn-filter {
    display: flex;
    align-items: center;
    gap: 6px;
    box-sizing: border-box;
    width: 117px;
    height: 43px;
    margin: 12px 0 0 32px;
    padding: 0 0 4px 12px;
    background-color: #fff;
    border: 1px solid #6c757d;
    border-radius: 4px;
    font-family: inherit;
    font-size: 18px;
    letter-spacing: 0.7px;
    color: #6c757d;
}

.btn-filter .icon {
    width: 18px;
    height: 18px;
}

.caret {
    width: 0;
    height: 0;
    margin: -3px 0 0 4px;
    border-left: 5px solid transparent;
    border-right: 5px solid transparent;
    border-top: 5px solid #6c757d;
}

/* scoreboard */
.scoreboard {
    width: 1639px;
    margin: 11px 0 0 140px;
    table-layout: fixed;
    border-collapse: collapse;
}

.scoreboard th {
    height: 56px;
    padding: 0;
    font-size: 14px;
    font-weight: 500;
    letter-spacing: 0.3px;
    border-right: 1px solid #bbb;
    border-bottom: 3px solid #000;
}

.col-rank {
    width: 38px;
    text-align: left;
}

.col-team {
    width: 338px;
    padding-left: 6px;
}

.col-score {
    width: 109px;
}

.prob {
    display: inline-block;
    box-sizing: border-box;
    width: 38px;
    height: 36px;
    line-height: 34px;
    background-color: #fff;
    border: 1px solid #bbb;
    border-radius: 5px;
    font-family: "Liberation Sans", sans-serif;
    font-size: 21px;
    font-weight: 700;
    text-align: center;
}

.scoreboard tbody td {
    box-sizing: border-box;
    height: 63px;
    padding: 0;
    border-top: 1px solid #000;
    border-bottom: 1px solid #000;
}

.scoreboard tbody tr.row-thick td {
    border-bottom-width: 2px;
}

.scoreboard tbody tr.row-empty td {
    height: 57.3px;
}

.scoreboard tbody tr.self td {
    background-color: #ffff99;
}

.scoreboard tbody tr:last-child td {
    border-bottom-width: 3px;
}

.rank {
    text-align: center;
    font-size: 17px;
    border-right: 2px solid #bbb;
}

.scoreboard tbody td.team {
    padding-top: 5px;
    vertical-align: top;
    border-right: 1px solid #bbb;
}

.scoreboard tbody tr.row-empty td.team {
    padding-top: 3px;
}

.team-box {
    display: flex;
    justify-content: space-between;
    padding: 0 8px 0 5px;
}

.flag {
    width: 48px;
    height: 37px;
    margin-top: 8px;
    border-radius: 6px;
}

.team-text {
    text-align: right;
}

.team-name {
    font-size: 17px;
    font-weight: 700;
    line-height: 25px;
}

.team-aff {
    margin-top: 2px;
    font-size: 13px;
    line-height: 20px;
    letter-spacing: 0.55px;
    color: #6c757d;
}

.points {
    text-align: center;
    font-size: 17px;
    font-weight: 700;
}

.time {
    text-align: center;
    font-size: 17px;
    border-right: 1px solid #bbb;
}

.scoreboard td.cell {
    padding: 0 1px;
}

.sc {
    height: 55px;
    margin: 1px 0;
    box-sizing: border-box;
    padding-top: 2px;
    text-align: center;
    font-size: 21px;
    line-height: 26px;
}

.sc span {
    display: block;
    margin-top: 2px;
    font-size: 14px;
    line-height: 24px;
    letter-spacing: 0.3px;
}

.first {
    background-color: #1daa1d;
}

.ok {
    background-color: #60e760;
}

.bad {
    background-color: #e87272;
}

.pending {
    background-color: #6666ff;
}

/* summary row */
.scoreboard tfoot td {
    padding: 0;
    border-bottom: 1px solid #000;
    border-right: 1px solid #bbb;
}

.summary-label {
    text-align: center;
    font-size: 15px;
    font-variant: small-caps;
}

.summary-total {
    padding-right: 54px !important;
    text-align: center;
    font-size: 17px;
    font-weight: 700;
}

.stat {
    height: 113px;
}

.stat p {
    display: flex;
    align-items: center;
    gap: 9px;
    height: 26.5px;
    margin: 0;
    padding-left: 4px;
    font-size: 13.5px;
}

.stat .icon {
    width: 18px;
    height: 18px;
}

.flip {
    transform: scaleY(-1);
}

/* legend */
.legend {
    width: 278px;
    margin: 87px 0 0 21px;
    border-collapse: collapse;
    text-align: center;
}

.legend th {
    height: 56px;
    padding: 0 0 2px;
    font-size: 20px;
    font-weight: 700;
    letter-spacing: 0.8px;
    border-right: 1px solid #bbb;
    border-bottom: 2px solid #000;
}

.legend td {
    height: 53px;
    padding: 0 0 4px;
    font-size: 17px;
    letter-spacing: 0.5px;
    border-right: 1px solid #bbb;
    border-bottom: 1px solid #000;
}

.page-foot {
    margin-top: 12px;
    text-align: right;
    font-size: 13px;
    line-height: 22px;
    letter-spacing: 0.3px;
    color: #7c8389;
    white-space: nowrap;
}
```
